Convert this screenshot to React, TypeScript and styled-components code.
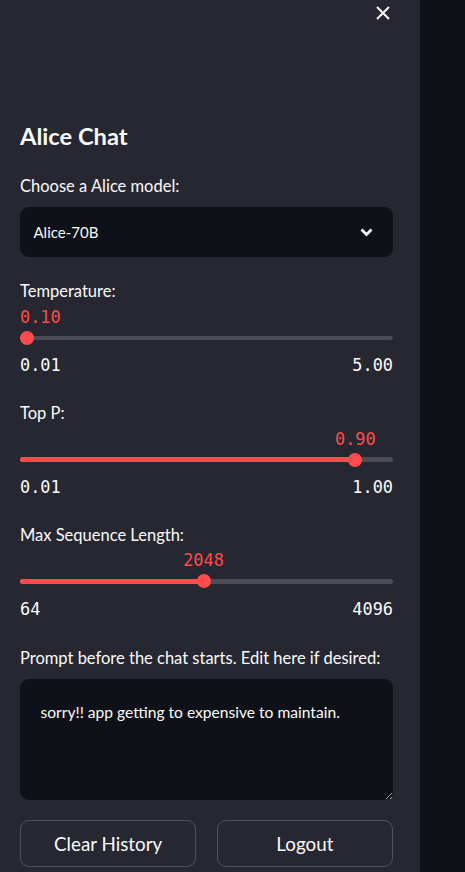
import React from 'react';
import styled, { createGlobalStyle } from 'styled-components';

const TRACK_WIDTH = 373;
const MONO_SIZE = 16.9;

const GlobalStyle = createGlobalStyle`
  html, body {
    margin: 0;
    padding: 0;
    background: #0e1117;
  }
  body {
    font-family: Lato, "Noto Sans", sans-serif;
    color: #fafafa;
  }
  * {
    box-sizing: border-box;
  }
`;

const Page = styled.div`
  display: flex;
  height: 872px;
  overflow: hidden;
  background: #0e1117;
`;

const Sidebar = styled.aside`
  width: 420px;
  flex: none;
  display: flex;
  flex-direction: column;
  background: #262730;
  padding: 0 27px 0 20px;
`;

const Main = styled.main`
  flex: 1;
  background: #0e1117;
`;

const CloseRow = styled.div`
  height: 26px;
  display: flex;
  justify-content: flex-end;
  align-items: flex-start;
  padding: 6px 3px 0 0;
`;

const IconButton = styled.button`
  width: 14px;
  height: 14px;
  padding: 0;
  border: 0;
  background: none;
  color: #fafafa;
  display: flex;
  cursor: pointer;
`;

const Title = styled.h2`
  margin: 94px 0 0;
  font-size: 23.7px;
  font-weight: 700;
  line-height: 32px;
`;

const Label = styled.label<{ $top: number }>`
  display: block;
  margin-top: ${({ $top }) => $top}px;
  font-size: 16.5px;
  line-height: 22px;
  color: #fafafa;
`;

const Select = styled.div`
  margin-top: 10px;
  height: 50px;
  border-radius: 9px;
  background: #0e1117;
  display: flex;
  align-items: center;
  justify-content: space-between;
  padding: 0 20px 0 13.5px;
  font-size: 15px;
  cursor: pointer;
`;

const Field = styled.div<{ $top: number }>`
  margin-top: ${({ $top }) => $top}px;
  display: flex;
  flex-direction: column;
`;

const Mono = styled.div<{ $accent?: boolean }>`
  font-family: "DejaVu Sans Mono", "Liberation Mono", monospace;
  font-size: ${MONO_SIZE}px;
  line-height: 20px;
  height: 20px;
  color: ${({ $accent }) => ($accent ? '#ff4b4b' : '#fafafa')};
  white-space: nowrap;
`;

const ValueRow = styled.div`
  margin-top: 4.5px;
  display: flex;
`;

const TrackArea = styled.div`
  position: relative;
  margin-top: 1px;
  height: 20px;
  display: flex;
  align-items: center;
`;

const Rail = styled.div`
  width: 100%;
  height: 4.5px;
  border-radius: 3px;
  background: #4b4c56;
  display: flex;
  overflow: hidden;
`;

const Fill = styled.div`
  height: 100%;
  background: #ff4b4b;
`;

const Thumb = styled.div`
  position: absolute;
  top: 3px;
  width: 14px;
  height: 14px;
  border-radius: 50%;
  background: #ff4b4b;
`;

const MinMax = styled.div`
  margin-top: 7.3px;
  display: flex;
  justify-content: space-between;
`;

const Prompt = styled.textarea`
  margin-top: 10px;
  height: 121px;
  width: 100%;
  border: 0;
  border-radius: 9px;
  background: #0e1117;
  color: #fafafa;
  color-scheme: dark;
  font-family: Lato, "Noto Sans", sans-serif;
  font-size: 15.6px;
  line-height: 27px;
  padding: 20px 20.5px 16px;
  resize: vertical;
  outline: none;
`;

const ButtonRow = styled.div`
  margin-top: 20px;
  display: grid;
  grid-template-columns: 1fr 1fr;
  gap: 20.5px;
`;

const Button = styled.button`
  height: 47.5px;
  border-radius: 9px;
  border: 1px solid rgba(250, 250, 250, 0.2);
  background: transparent;
  color: #fafafa;
  font-family: Lato, "Noto Sans", sans-serif;
  font-size: 18.8px;
  cursor: pointer;
`;

interface SliderProps {
  label: string;
  min: number;
  max: number;
  value: number;
  digits: number;
  top: number;
}

const SliderField = ({ label, min, max, value, digits, top }: SliderProps) => {
  const frac = (value - min) / (max - min);
  const text = value.toFixed(digits);
  const textWidth = text.length * 0.602 * MONO_SIZE;
  const center = frac * TRACK_WIDTH;
  const offset = Math.min(Math.max(center - textWidth / 2, 0), TRACK_WIDTH - textWidth);
  return (
    <Field $top={top}>
      <Label $top={0}>{label}</Label>
      <ValueRow>
        <Mono $accent style={{ marginLeft: offset }}>{text}</Mono>
      </ValueRow>
      <TrackArea>
        <Rail>
          <Fill style={{ width: center }} />
        </Rail>
        <Thumb style={{ left: center - 7 }} />
      </TrackArea>
      <MinMax>
        <Mono>{min.toFixed(digits)}</Mono>
        <Mono>{max.toFixed(digits)}</Mono>
      </MinMax>
    </Field>
  );
};

const CloseIcon = () => (
  <svg width="14" height="14" viewBox="0 0 14 14" fill="none" stroke="currentColor" strokeWidth="2">
    <path d="M1 1L13 13M13 1L1 13" />
  </svg>
);

const Chevron = () => (
  <svg width="13" height="9" viewBox="0 0 13 9" fill="none" stroke="#fafafa" strokeWidth="2.8">
    <path d="M1.5 1.5L6.5 6.5L11.5 1.5" />
  </svg>
);

export default function App() {
  return (
    <Page>
      <GlobalStyle />
      <Sidebar>
        <CloseRow>
          <IconButton aria-label="Close sidebar">
            <CloseIcon />
          </IconButton>
        </CloseRow>
        <Title>Alice Chat</Title>
        <Label $top={23}>Choose a Alice model:</Label>
        <Select>
          <span>Alice-70B</span>
          <Chevron />
        </Select>
        <SliderField label="Temperature:" min={0.01} max={5} value={0.1} digits={2} top={23.4} />
        <SliderField label="Top P:" min={0.01} max={1} value={0.9} digits={2} top={27} />
        <SliderField label="Max Sequence Length:" min={64} max={4096} value={2048} digits={0} top={27} />
        <Label $top={28}>Prompt before the chat starts. Edit here if desired:</Label>
        <Prompt readOnly defaultValue="sorry!! app getting to expensive to maintain." />
        <ButtonRow>
          <Button>Clear History</Button>
          <Button>Logout</Button>
        </ButtonRow>
      </Sidebar>
      <Main />
    </Page>
  );
}
